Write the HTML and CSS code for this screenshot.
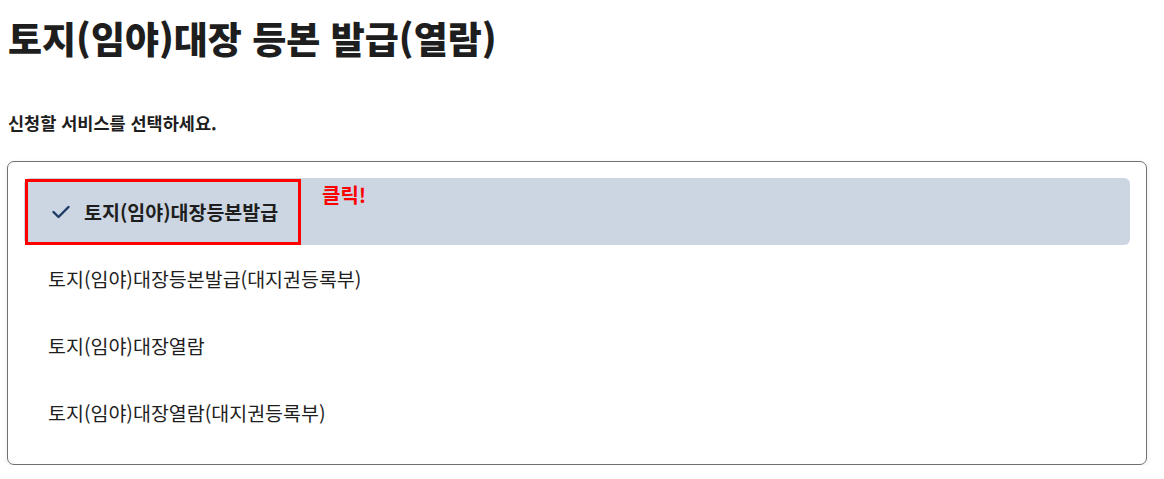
FILE: index.html
```html
<!DOCTYPE html>
<html lang="ko">
<head>
<meta charset="utf-8">
<link rel="stylesheet" href="styles.css">
</head>
<body>
<div class="page">
  <h1 class="title">토지(임야)대장 등본 발급(열람)</h1>
  <p class="subtitle">신청할 서비스를 선택하세요.</p>
  <div class="listbox">
    <div class="item selected">
      <span class="check">
        <svg width="18" height="14" viewBox="0 0 18 14"><path d="M1.5 7 L6.5 12 L16.5 2" fill="none" stroke="#1d3a66" stroke-width="2.4" stroke-linecap="round" stroke-linejoin="round"/></svg>
      </span>
      <span class="label">토지(임야)대장등본발급</span>
      <span class="highlight-frame"></span>
      <span class="click-note">클릭!</span>
    </div>
    <div class="item"><span class="label">토지(임야)대장등본발급(대지권등록부)</span></div>
    <div class="item"><span class="label">토지(임야)대장열람</span></div>
    <div class="item"><span class="label">토지(임야)대장열람(대지권등록부)</span></div>
  </div>
</div>
</body>
</html>
```
FILE: styles.css
```css
html, body {
  margin: 0;
  padding: 0;
  background: #ffffff;
}
body {
  font-family: "Noto Sans CJK KR", "Noto Sans", sans-serif;
  color: #1e1e1e;
}
.page {
  padding: 0 17px 0 7px;
}
.title {
  margin: 0;
  padding: 8px 0 0 1px;
  font-size: 37px;
  line-height: 60px;
  font-weight: 900;
  color: #1e1e1e;
}
.subtitle {
  margin: 43px 0 0 1px;
  font-size: 17.5px;
  line-height: 24px;
  font-weight: 700;
  color: #1e1e1e;
}
.listbox {
  margin-top: 26px;
  border: 1px solid #707070;
  border-radius: 7px;
  padding: 16px 16px 18px 16px;
  box-shadow: 0 2px 6px rgba(0,0,0,0.08);
  display: flex;
  flex-direction: column;
}
.item {
  position: relative;
  height: 67px;
  display: flex;
  align-items: center;
  padding-left: 24px;
  font-size: 19.5px;
  color: #1e1e1e;
  border-radius: 6px;
}
.item.selected {
  background: #ccd6e2;
  padding-left: 28px;
  font-weight: 700;
}
.check {
  display: flex;
  width: 32px;
  align-items: center;
}
.highlight-frame {
  position: absolute;
  left: 1px;
  top: 1px;
  width: 276px;
  height: 66px;
  box-sizing: border-box;
  border: 3px solid #ff0000;
}
.click-note {
  position: absolute;
  left: 298px;
  top: 2px;
  font-size: 20px;
  font-weight: 700;
  color: #ff0000;
}
```
